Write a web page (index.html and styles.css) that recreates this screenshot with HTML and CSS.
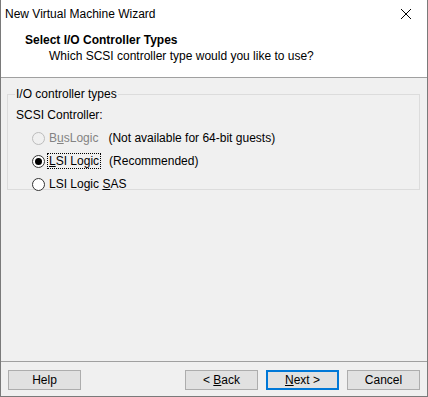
FILE: index.html
```html
<!DOCTYPE html>
<html lang="en">
<head>
    <meta charset="UTF-8">
    <title>New Virtual Machine Wizard</title>
    <link rel="stylesheet" href="styles.css">
</head>
<body>
    <div class="window">
        <div class="top">
            <div class="titlebar">
                <span class="title">New Virtual Machine Wizard</span>
                <svg class="close" width="12" height="12" viewBox="0 0 12 12">
                    <path d="M1 1 L11 11 M11 1 L1 11" stroke="#000" stroke-width="1"/>
                </svg>
            </div>
            <div class="header">
                <div class="heading">Select I/O Controller Types</div>
                <div class="subheading">Which SCSI controller type would you like to use?</div>
            </div>
        </div>

        <div class="content">
            <fieldset class="group">
                <legend>I/O controller types</legend>
                <div class="label">SCSI Controller:</div>
                <div class="options">
                    <div class="option disabled">
                        <span class="radio"></span>
                        <span class="name">B<u>u</u>sLogic</span>
                        <span class="note">(Not available for 64-bit guests)</span>
                    </div>
                    <div class="option">
                        <span class="radio checked"></span>
                        <span class="name focus"><u>L</u>SI Logic</span>
                        <span class="note">(Recommended)</span>
                    </div>
                    <div class="option">
                        <span class="radio"></span>
                        <span class="name">LSI Logic <u>S</u>AS</span>
                    </div>
                </div>
            </fieldset>
        </div>

        <div class="footer">
            <button class="btn">Help</button>
            <div class="spacer"></div>
            <button class="btn">&lt; <u>B</u>ack</button>
            <button class="btn default"><u>N</u>ext &gt;</button>
            <button class="btn">Cancel</button>
        </div>
    </div>
</body>
</html>
```

FILE: styles.css
```css
/* Dialog window */
body {
    margin: 0;
    font-family: "Liberation Sans", Arial, sans-serif;
    font-size: 12px;
    color: #000;
    background-color: #f0f0f0;
}

.window {
    width: 428px;
    height: 397px;
    box-sizing: border-box;
    border: 1px solid #7a7a7a;
    border-top: none;
    display: flex;
    flex-direction: column;
}

.top {
    background-color: #fff;
    border-bottom: 1px solid #a0a0a0;
    height: 78px;
    box-sizing: border-box;
}

.titlebar {
    height: 27px;
    display: flex;
    align-items: center;
    padding-left: 4px;
    padding-right: 15px;
}

.title {
    flex: 1;
}

.close {
    display: block;
}

.header {
    padding-left: 24px;
}

.heading {
    font-weight: bold;
    margin-top: 6px;
    height: 16px;
}

.subheading {
    padding-left: 24px;
    height: 16px;
}

.content {
    flex: 1;
    padding: 9px 7px 0 6px;
}

.group {
    margin: 0;
    padding: 6px 8px 9px 8px;
    border: 1px solid #dcdcdc;
    height: 103px;
    box-sizing: border-box;
}

.group legend {
    padding: 0 1px;
    margin-left: -1px;
}

.label {
    margin-top: 1px;
}

.options {
    margin-top: 9px;
    padding-left: 16px;
    display: flex;
    flex-direction: column;
    gap: 9px;
}

.option {
    display: flex;
    align-items: center;
    height: 14px;
    white-space: nowrap;
}

.radio {
    flex: none;
    width: 11px;
    height: 11px;
    border: 1px solid #333;
    border-radius: 50%;
    background-color: #fff;
    position: relative;
    margin-right: 2px;
}

.radio.checked::after {
    content: "";
    position: absolute;
    left: 2px;
    top: 2px;
    width: 7px;
    height: 7px;
    border-radius: 50%;
    background-color: #000;
}

.name {
    min-width: 48px;
    padding: 0 1px;
    border: 1px dotted transparent;
    margin-right: 8px;
}

.name.focus {
    border-color: #000;
}

.option.disabled .radio {
    border-color: #bcbcbc;
    background-color: #f0f0f0;
}

.option.disabled .name {
    color: #838383;
}

.footer {
    border-top: 1px solid #a0a0a0;
    height: 35px;
    box-sizing: border-box;
    display: flex;
    align-items: flex-start;
    padding: 8px 7px 0 7px;
    gap: 8px;
}

.spacer {
    flex: 1;
}

.btn {
    width: 73px;
    height: 20px;
    font-family: "Liberation Sans", Arial, sans-serif;
    font-size: 12px;
    background-color: #e1e1e1;
    border: 1px solid #adadad;
    padding: 0;
    margin: 0;
    color: #000;
}

.btn.default {
    border: 2px solid #0078d7;
}
```
